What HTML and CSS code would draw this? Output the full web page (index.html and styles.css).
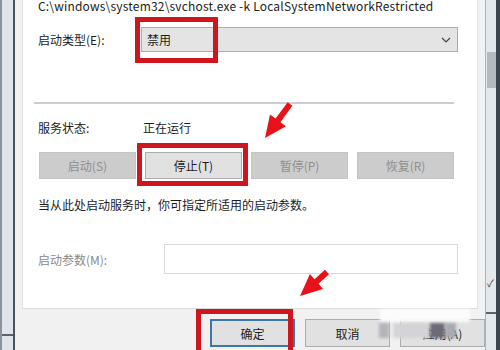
FILE: index.html
```html
<!DOCTYPE html>
<html lang="zh-CN">
<head>
<meta charset="utf-8">
<title>服务属性</title>
<link rel="stylesheet" href="styles.css">
</head>
<body>
<div class="screen">
  <div class="frame-left"><div class="frame-left-end"></div></div>
  <div class="dialog">
    <div class="panel">
      <div class="path">C:\windows\system32\svchost.exe -k LocalSystemNetworkRestricted</div>
      <div class="row startup">
        <span class="label">启动类型(E):</span>
        <div class="select"><span>禁用</span>
          <svg class="chev" width="10" height="6" viewBox="0 0 10 6"><path d="M1 1 L5 5 L9 1" fill="none" stroke="#444" stroke-width="1.2"/></svg>
        </div>
      </div>
      <div class="sep"></div>
      <div class="row status">
        <span class="label">服务状态:</span>
        <span class="value">正在运行</span>
      </div>
      <div class="btns">
        <button class="btn disabled">启动(S)</button>
        <button class="btn">停止(T)</button>
        <button class="btn disabled">暂停(P)</button>
        <button class="btn disabled">恢复(R)</button>
      </div>
      <div class="desc">当从此处启动服务时，你可指定所适用的启动参数。</div>
      <div class="row params">
        <span class="label dim">启动参数(M):</span>
        <div class="input"></div>
      </div>
    </div>
    <div class="bottom">
      <button class="btn dbtn default">确定</button>
      <button class="btn dbtn">取消</button>
      <button class="btn dbtn">应用(A)</button>
    </div>
  </div>
  <div class="scroll">
    <div class="track"><div class="thumb"></div><span class="check">✓</span><div class="track-end"></div></div>
    <div class="edge"></div>
  </div>

  <div class="mark box1"></div>
  <div class="mark box2"></div>
  <div class="mark box3"></div>
  <div class="wm wm1"></div>
  <div class="wm wm2"></div>
  <div class="wm wm3"></div>
  <div class="wm wm4"></div>
  <div class="wm wm5"></div>
  <svg class="arrows" width="500" height="350" viewBox="0 0 500 350">
    <polygon fill="#e8121a" points="265,138 286,126.3 280.4,122.2 292.4,105.8 287.6,102.2 275.6,118.6 270,114.5"/>
    <polygon fill="#e8121a" points="300,296 323.1,289 318.5,283.7 329,274.3 325,269.7 314.5,279.2 309.9,274"/>
  </svg>
</div>
</body>
</html>
```
FILE: styles.css
```css
* { box-sizing: border-box; }
html, body { margin: 0; padding: 0; }
body {
  width: 500px; height: 350px; overflow: hidden;
  font-family: "Noto Sans CJK SC", "Noto Sans", sans-serif;
  font-size: 12px; color: #1c1c1c;
}
.screen { position: relative; display: flex; width: 500px; height: 350px; overflow: hidden; }

.frame-left {
  width: 15px; height: 350px; flex: none;
  background: #dfe5ea;
  border-left: 2px solid #8a939c;
  border-right: 2px solid #48535e;
  padding-top: 334px;
}
.frame-left-end { height: 2px; background: #59636d; }

.dialog {
  flex: 1; height: 350px;
  background: #f1f1f1;
  padding: 0 7px 0 7px;
  display: flex; flex-direction: column;
}
.panel {
  height: 309px; background: #fff;
  border-left: 1px solid #e2e2e2;
  border-right: 1px solid #e2e2e2;
  border-bottom: 1px solid #dcdcdc;
  padding: 0 19px 0 15px;
}
.path { margin-top: -2px; line-height: 16px; white-space: nowrap; color: #222; letter-spacing: 0.19px; }
.row { display: flex; align-items: center; }
.label { width: 103px; flex: none; }
.startup { margin-top: 13px; height: 25px; }
.select {
  flex: 1; height: 25px; background: #e4e4e4;
  border: 1px solid #adadad;
  display: flex; align-items: center; justify-content: space-between;
  padding: 0 6px 0 5px;
}
.sep { height: 2px; background: #cdcdcd; margin: 50px 4px 0 -4px; }
.status { margin-top: 15px; height: 16px; }
.status .value { margin-left: 2px; }
.btns { display: flex; gap: 9px; margin-top: 17px; margin-left: 1px; }
.btn {
  font: inherit; font-size: 12px;
  width: 97px; height: 27px;
  background: #e1e1e1; border: 1px solid #adadad; color: #1c1c1c;
  padding: 0;
}
.btn.disabled { background: #cccccc; border-color: #c4c4c4; color: #8f8f8f; }
.desc { margin-top: 18px; line-height: 16px; }
.params { margin-top: 31px; height: 30px; }
.params .label { width: 126px; }
.dim { color: #8a8a8a; }
.input { flex: 1; height: 30px; border: 1px solid #d9d9d9; background: #fff; }

.bottom { display: flex; justify-content: flex-end; gap: 10px; padding-top: 10px; margin-right: -7px; }
.dbtn { width: 85px; height: 28px; }
.dbtn.default { border: 2px solid #3d77a8; }

.scroll { width: 15px; flex: none; display: flex; height: 350px; }
.track {
  position: relative; width: 11px; height: 350px;
  background: #e3e8ec; border-left: 1px solid #a9b3bc;
  padding-top: 52px;
}
.thumb { height: 36px; background: #b5babf; margin-left: 1px; }
.check { position: absolute; left: 1px; top: 275px; font-size: 10px; color: #333; }
.track-end { position: absolute; left: 0; right: 0; top: 312px; height: 2px; background: #5a646e; }
.edge { width: 4px; background: #3b4550; }

.mark { position: absolute; border: 5px solid #cf151d; }
.box1 { left: 135px; top: 17px; width: 83px; height: 46px; }
.box2 { left: 137px; top: 143px; width: 111px; height: 43px; }
.box3 { left: 196px; top: 309px; width: 97px; height: 48px; }

.wm { position: absolute; filter: blur(1.5px); }
.wm1 { left: 380px; top: 309px; width: 90px; height: 13px; background: #fbfbfb; }
.wm2 { left: 393px; top: 323px; width: 37px; height: 15px; background: #d4d4d8; }
.wm3 { left: 430px; top: 323px; width: 15px; height: 15px; background: #6c6c78; }
.wm4 { left: 445px; top: 323px; width: 11px; height: 15px; background: #a9a9b2; }
.wm5 { left: 379px; top: 323px; width: 10px; height: 15px; background: #b4b4ba; }

.arrows { position: absolute; left: 0; top: 0; }
```
